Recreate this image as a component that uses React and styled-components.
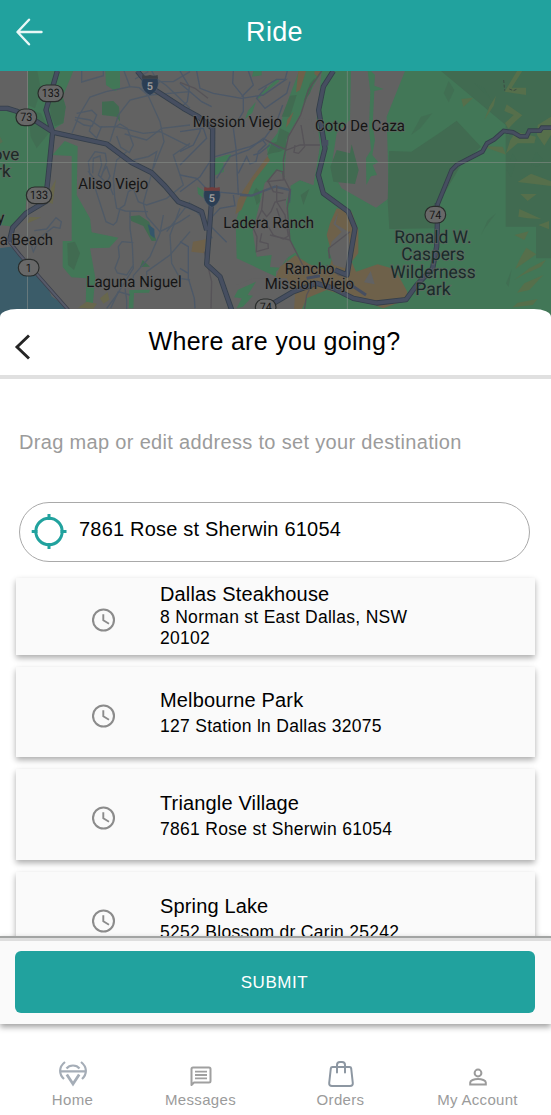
import React from 'react';
import styled, { createGlobalStyle } from 'styled-components';

const teal = '#21a29e';

const GlobalStyle = createGlobalStyle`
  * { box-sizing: border-box; }
  body {
    margin: 0;
    background: #fff;
    font-family: "Liberation Sans", Arial, sans-serif;
    color: #000;
  }
  button { font: inherit; border: 0; background: none; padding: 0; }
`;

const Screen = styled.div`
  width: 551px;
  height: 1115px;
  display: flex;
  flex-direction: column;
  overflow: hidden;
`;

const Header = styled.header`
  height: 71px;
  flex: none;
  display: grid;
  grid-template-columns: 59px 1fr 61px;
  align-items: center;
  background: ${teal};
  color: #fff;
  padding-bottom: 8px;
`;

const HeaderTitle = styled.h1`
  margin: 0;
  text-align: center;
  font-size: 27px;
  font-weight: 400;
  letter-spacing: 0.35px;
  line-height: 32px;
`;

const IconButton = styled.button`
  display: flex;
  padding-left: ${(p) => p.$inset}px;
  padding-top: ${(p) => p.$drop || 0}px;
`;

const MapView = styled.svg`
  display: block;
  flex: none;
  width: 551px;
  height: 250px;
  background: #626262;
  text-rendering: geometricPrecision;
`;

const Sheet = styled.main`
  position: relative;
  flex: none;
  margin-top: -12px;
  height: 627px;
  background: #fff;
  border-radius: 17px 17px 0 0 / 8px 8px 0 0;
  overflow: hidden;
`;

const SheetHeader = styled.div`
  height: 70px;
  border-bottom: 4px solid #e0e0e0;
  display: grid;
  grid-template-columns: 59px 1fr 61px;
  align-items: center;
`;

const SheetTitle = styled.h2`
  margin: 0;
  padding-bottom: 2px;
  text-align: center;
  font-size: 25px;
  font-weight: 400;
  letter-spacing: 0.29px;
  line-height: 32px;
`;

const Hint = styled.p`
  margin: 51px 0 0 19px;
  font-size: 20px;
  line-height: 24px;
  letter-spacing: 0.33px;
  color: #9b9b9b;
`;

const AddressField = styled.div`
  margin: 48px 21px 0 19px;
  height: 60px;
  border: 1px solid #a9a9a9;
  border-radius: 30px;
  display: flex;
  align-items: center;
  padding: 0 12px 2px 11px;
  gap: 11px;
  font-size: 20px;
  letter-spacing: 0.2px;
`;

const AddressText = styled.span`
  padding-bottom: 3px;
`;

const PlaceList = styled.div`
  display: flex;
  flex-direction: column;
  gap: 12px;
  padding: 16px 16px 0;
`;

const PlaceCard = styled.div`
  height: ${(p) => p.$height}px;
  flex: none;
  display: grid;
  grid-template-columns: 144px 270px;
  align-items: center;
  background: #fafafa;
  box-shadow: 0 3px 6px rgba(0, 0, 0, 0.33);
`;

const PlaceIcon = styled.div`
  display: flex;
  padding: ${(p) => p.$top}px 0 0 76px;
`;

const PlaceText = styled.div`
  padding-top: ${(p) => (p.$tight ? 0 : 1)}px;
  padding-bottom: ${(p) => (p.$tight ? 2 : 0)}px;
`;

const PlaceName = styled.div`
  font-size: 20px;
  line-height: 24px;
  letter-spacing: 0.15px;
  margin-bottom: ${(p) => (p.$tight ? 1 : 4)}px;
`;

const PlaceAddress = styled.div`
  font-size: 17.5px;
  line-height: 21px;
  letter-spacing: 0.29px;
`;

const SubmitBar = styled.div`
  position: relative;
  flex: none;
  height: 88px;
  border-top: 2px solid #a2a4a3;
  background: #fafafa;
  box-shadow: inset 0 3px 0 #dedede, 0 3px 6px rgba(0, 0, 0, 0.38);
  padding: 13px 16px 10px 15px;
`;

const SubmitButton = styled.button`
  display: block;
  width: 100%;
  height: 62px;
  border-radius: 6px;
  background: ${teal};
  color: #fff;
  font-size: 17px;
  letter-spacing: 0.55px;
  padding: 2px 1px 0 0;
`;

const TabBar = styled.nav`
  flex: none;
  height: 91px;
  display: grid;
  grid-template-columns: 145px 111px 169px 105px;
  padding: 32px 0 0;
`;

const Tab = styled.a`
  display: flex;
  flex-direction: column;
  align-items: center;
  color: #9b9b9b;
  font-size: 15px;
  line-height: 18px;
  letter-spacing: 0.32px;
`;

const TabIcon = styled.span`
  height: 35px;
  display: flex;
  align-items: center;
  padding-top: ${(p) => p.$drop || 0}px;
`;

const MapLabel = styled.text`
  font-family: Roboto, sans-serif;
  font-size: ${(p) => p.$size || 47}px;
  fill: ${(p) => p.$fill || '#151515'};
  stroke: #646464;
  stroke-opacity: 0.7;
  stroke-width: 5px;
  paint-order: stroke;
  text-anchor: middle;
`;

function PlaceLabel({ width, children, ...rest }) {
  return (
    <MapLabel textLength={width} lengthAdjust="spacingAndGlyphs" {...rest}>
      {children}
    </MapLabel>
  );
}

function RouteShield({ x, y, n }) {
  const w = n.length === 3 ? 76 : 62;
  return (
    <g>
      <rect x={x - w / 2} y={y - 25} width={w} height="50" rx="25" fill="#686868" stroke="#292c2b" strokeWidth="3.5" />
      <text x={x} y={y + 12} textAnchor="middle" fontFamily="Roboto, sans-serif" fontSize="35" textLength={n.length * 18} lengthAdjust="spacingAndGlyphs" fill="#151515">{n}</text>
    </g>
  );
}

function InterstateShield({ x, y, top }) {
  return (
    <g transform={`translate(${x} ${y})`}>
      <path d="M-23-18H23C29 4 21 23 0 33C-21 23-29 4-23-18Z" fill="#2b3e54" stroke="#526071" strokeWidth="1.5" />
      <path d="M-23-28Q-13-23 0-28Q13-23 23-28L24-17H-24Z" fill={top} />
      <text y="17" textAnchor="middle" fontFamily="Roboto, sans-serif" fontWeight="700" fontSize="33" fill="#999">5</text>
    </g>
  );
}

const land = '#626262';
const green = '#427757';
const darkGreen = '#416b51';
const olive = '#566f4b';
const sand = '#6e614a';

const highways =
  'M0 130H22L48 138L98 162L160 202L320 237L395 293L455 323L495 363L535 410L570 423L605 440L620 495' +
  'M172 18L138 135L158 202L144 340L136 410L78 445L38 488L28 530' +
  'M412 18L450 65L550 130L595 155L638 190L637 380L620 598L660 635L695 735' +
  'M1000 18L970 65L956 135L975 250L955 330L970 385L1045 440L1065 490L1041 630L1005 615' +
  'M1312 415V480L1310 545L1298 610L1250 660L1218 704L1130 714L1060 700L1000 670L950 655L880 680L820 715';

const ortega =
  'M1653 188H1626L1620 197H1588L1580 214H1560L1539 202L1511 198L1483 223L1461 235L1447 260L1370 300L1355 315L1312 420';

function RegionMap() {
  return (
    <MapView viewBox="0 18 1653 750" preserveAspectRatio="none" role="img" aria-label="Map">
      {/* west: parks and water */}
      <g>
        <path d="M84 18H220L188 95L197 125L190 174L165 190L155 212L148 320L140 370L80 390L76 444L40 485L0 480V137L84 133Z" fill={green} />
        <path d="M84 133L123 145L150 200L110 250L92 215ZM84 18H112L123 75L105 130L84 120Z" fill={darkGreen} opacity=".7" />
        <path d="M148 100L188 95L197 125L190 174L165 184L152 150Z" fill={darkGreen} />
        <path d="M316 18H360V71L345 78L318 60Z" fill={green} />
        <path d="M306 110L340 108L357 125L360 170L350 155L306 150Z" fill={darkGreen} />
        <path d="M157 270L194 228L233 244L230 390L270 460L275 502L355 518L328 548L270 550L286 638L284 660L278 723H257L259 640L214 637L188 606V528H215V273Z" fill={green} />
        <path d="M202 535L225 530L240 565L222 615L204 600Z" fill={darkGreen} />
        <path d="M388 454L418 451L447 470L470 527L455 528L430 483L394 468ZM428 585L450 605L420 606Z" fill={darkGreen} />
        <path d="M443 477L463 492L464 520L451 510Z" fill="#34566b" />
        <path d="M388 675L450 674L447 683L402 684L400 730H386Z" fill={green} />
        <path d="M0 550L30 545L50 557L80 610L137 655L155 694L180 712L202 735V775H0Z" fill="#3b5c69" />
        <path d="M153 370L168 342L158 417L146 412ZM88 456L124 457L82 475ZM300 700L323 681L328 704L310 716ZM234 728L260 710L291 716L280 731Z" fill="#68674d" />
        <path d="M0 215L8 230L0 236Z" fill="#556e52" />
      </g>

      {/* centre: parks along the valley */}
      <path d="M965 18H1653V768H900L905 690L858 610L870 520L862 440L872 362L900 345L940 360L960 240L950 160Z" fill={green} />
      <g transform="translate(540 0)">
        <path d="M220 18H245V31L216 35ZM290 41L299 48L230 105L234 95ZM228 110L217 143L195 163L204 137ZM106 280L136 271L153 268L149 285L130 292L132 320L102 332ZM52 365L72 378L71 400L54 387Z" fill={green} />
        <path d="M357 18H426L385 90L360 150L325 210L314 340L330 375L330 525L318 590L288 620L288 635L170 580L167 470L190 400L265 275L260 245L292 205L330 90Z" fill={green} />
        <path d="M305 155L330 92L350 90L330 155ZM390 55L405 38L390 85L370 110Z" fill={darkGreen} />
        <path d="M261 270L275 235L290 230L300 190L330 205L318 225L318 250L300 260L275 265Z" fill={darkGreen} />
        <path d="M355 18H378L360 75L348 82ZM404 18H421L414 35L403 27ZM262 274L270 286L220 350L184 435L166 448L174 405L190 376L220 331ZM322 163L341 140L329 173L318 188Z" fill={sand} />
        <path d="M39 530L78 523L73 565L34 560Z" fill={sand} />
        <path d="M254 355L295 313L316 340L332 375L318 410L330 525L350 560L320 580L302 608L270 606L275 570L230 575L218 500Z" fill={land} />
        <path d="M360 160L395 165L405 225L420 240L400 360L360 345L332 358L312 330L322 225Z" fill={land} />
        <path d="M228 368L238 377L240 409L230 420L220 385ZM362 390L388 372L370 420Z" fill={darkGreen} />
      </g>
      <path d="M826 640L840 605L886 571L928 598L985 618L998 575L980 510L990 475L1010 430L1055 440L1075 495L1075 565L1055 590L1068 620L1133 598L1185 613L1222 680L1218 705L1150 730L1080 705L980 675L920 700L890 768H850L880 705Z" fill={sand} />
      <path d="M760 640H860L885 690L880 768H710V660Z" fill={land} />
      <path d="M1015 440L1007 477L1045 500L1050 560L1035 610L1000 600L988 560L995 530L1025 500L1000 477ZM1112 618L1124 658L1092 652Z" fill={land} />
      <path d="M714 674L768 650L743 690L759 692L729 725L710 730L725 700L702 697Z" fill={green} />

      {/* east: plateau and wilderness */}
      <path d="M1053 18H1215L1160 155L1167 400L1128 428L1025 370L993 315L1010 205L1050 165Z" fill={land} />
      <path d="M1010 255L1050 265L1055 238L1065 275L1076 315L1065 357L1000 350L991 305Z" fill={darkGreen} />
      <g transform="translate(1083 0)">
        <path d="M240 18H570V485H434V180ZM84 258L151 260L245 197L287 167L360 245L300 300L230 420L225 490L85 492L80 410ZM525 485H570V580H525Z" fill={darkGreen} />
        <path d="M30 18L42 30L40 62L68 72L40 78L35 180L42 225L34 270L52 292L35 300L48 330L30 334L16 360L15 280L30 255L24 190L28 80L20 18Z" fill={green} />
        <g fill={olive}>
          <path d="M468 18H484L452 68H495V90L431 80ZM301 102L337 98L307 126ZM405 92L398 122L370 165L385 125ZM430 138L437 118L484 151L462 170L442 191L432 174L458 150ZM359 243L425 245L435 269L385 251ZM465 200L525 215L520 235L470 235L435 265L448 225ZM530 180L570 155V210L550 242L528 210ZM510 326L570 349V363L470 351ZM478 387H527L500 408ZM475 432L541 462L500 460L472 455ZM532 480L564 468V493ZM460 510L503 499L490 525ZM496 548L526 568L462 613L480 575ZM505 610L555 584L540 605L485 630L460 644ZM490 655L547 630L505 675L468 683ZM470 713L530 702L515 720L455 727Z" />
        </g>
        <g fill={darkGreen} opacity=".65">
          <path d="M263 48L280 75L263 112L248 85ZM214 145L178 190L150 210L180 155ZM405 445L370 492L360 510L380 466ZM452 613L443 666L435 655ZM340 55L370 70L390 105ZM455 265L466 285L450 335L437 315ZM525 260L545 282L532 305L510 300Z" />
        </g>
      </g>

      {/* local streets */}
      <g fill="none" stroke="#4f5a67" strokeWidth="4">
        <path d="M245 18V51L310 32V18M372 18L390 65L318 80L270 96L238 150L216 205M390 65L418 68L444 91L480 170L492 230L460 310M225 157L270 165L300 186L350 185L430 205L480 200L570 245" />
        <path d="M230 145L275 136L290 150L276 184L252 180L225 164M305 184L290 219L268 198L274 180M345 186L360 177L382 190L400 240L388 263L362 247L350 213M330 230L355 150L390 105L450 90L570 80" />
        <path d="M374 207L440 225L485 190L570 180M380 260L350 285L340 340L344 395L350 430L376 438L444 440M400 285L445 275L470 260L455 325L430 415L440 455L480 500L540 470L570 450" />
        <path d="M270 330L265 290L285 260L316 265L320 290L303 337M278 325L280 280L300 273L305 300L295 330L330 365L340 390M310 318L320 305L330 333L320 355L285 345L264 318" />
        <path d="M284 365L318 470L340 480L350 470L360 430L374 420L385 380L400 370L415 410L440 420L500 400L550 360L520 270L570 235" />
        <path d="M390 440V490L397 540L400 610L350 690L320 730M400 533L366 530L355 545L358 576L345 610L352 624L380 630L400 600M490 450L480 505L450 575L400 632L400 655M500 500L570 410M540 430L510 510L515 595L540 640L570 645" />
        <path d="M430 80L480 50H520L570 20M455 18L468 40L500 62L570 130M405 42L445 20M103 497L140 492L168 458L184 470L180 490L160 486L120 518L100 560L90 530M440 650V620L510 570L570 500M375 670L380 705V735M332 730L355 680L390 690" />
      </g>
      <g transform="translate(540 0)" fill="none" stroke="#4c5868" strokeWidth="4">
        <path d="M0 55L65 110L95 125M0 18L28 65L22 110L0 130M50 18L60 70L100 85L185 100L250 90L318 43H290L235 75M160 18L158 55L190 95V140L160 190L168 250L175 390M315 43L322 18M0 200L70 190L80 220L0 300M0 260L40 240L60 200L65 155M260 65L230 100L255 130L320 85L330 50M185 95L220 60L205 18M0 380L60 335L98 277L210 245L250 225L290 170L308 120" />
        <path d="M248 225L258 238L235 260L228 290L210 297L200 275L175 325M100 380L210 390M0 420L50 440L98 490L140 532M0 530L25 545V640L43 700L45 730M25 625L0 610M92 460L120 430L165 422L160 390M97 390L50 340L0 330M97 520L70 480M220 270L238 265L270 240" />
        <path d="M110 340L150 275L205 255L250 220L300 250" />
        <path d="M180 390L215 392L250 378L285 365L330 375L327 413" strokeWidth="7" />
      </g>
      <g fill="none" stroke="#565358" strokeWidth="4" transform="translate(540 0)">
        <path d="M425 18L385 75L362 150L325 215L310 285L312 340L330 375L322 430L330 525L368 600M262 350L290 315L308 320L310 345L260 350M251 375L245 435L260 455L273 440L285 411L318 404M245 435L220 490L231 515L229 560L265 550L264 536L240 530L245 505M290 360V410L315 450L325 513L310 522L280 510L250 460M257 225L320 255L360 240L420 240M363 180L374 245L356 265L342 262L345 240M265 350L280 380L310 385M290 430L305 475M330 525L270 510" />
        <path d="M84 100L45 70L0 52M73 560L95 650L93 730M448 580L446 550L510 500M450 580L445 555M373 735L380 690L400 650M440 600L475 630L500 635" />
      </g>

      {/* highways: dark casing, then the road surface */}
      <path d="M28 530L60 570L205 735" fill="none" stroke="#3b3f4b" strokeWidth="11" />
      <path d="M28 530L60 570L205 735" fill="none" stroke="#565a69" strokeWidth="6" />
      <path d={highways} fill="none" stroke="#343f4b" strokeWidth="16" strokeLinejoin="round" />
      <path d={highways} fill="none" stroke="#464e60" strokeWidth="11" strokeLinejoin="round" />
      <path d={ortega} fill="none" stroke="#343f4b" strokeWidth="14" />
      <path d={ortega} fill="none" stroke="#464e60" strokeWidth="9" />
      <path d="M920 640L960 632M1045 655L1098 690" fill="none" stroke="#464e60" strokeWidth="9" />
      <path d="M975 225V242" fill="none" stroke="#464e60" strokeWidth="20" />

      <path d="M82.500 18V768M1042 18V768M0 292.500H1653" stroke="#8b918d" strokeWidth="2.500" opacity=".65" />
      <path d="M1511 45L1514 77M1528 72L1540 77L1552 72" fill="none" stroke="#3b4b43" strokeWidth="3" strokeDasharray="9 5" />

      <RouteShield x={152} y={85} n="133" />
      <RouteShield x={79} y={157} n="73" />
      <RouteShield x={117} y={391} n="133" />
      <RouteShield x={86} y={608} n="1" />
      <RouteShield x={1306} y={449} n="74" />
      <RouteShield x={797} y={727} n="74" />
      <InterstateShield x={450} y={58} top="#3b4045" />
      <InterstateShield x={636} y={394} top="#713d3d" />

      <PlaceLabel x="340" y="372" width="210">Aliso Viejo</PlaceLabel>
      <PlaceLabel x="402" y="666" width="286">Laguna Niguel</PlaceLabel>
      <PlaceLabel x="79" y="540" width="160">a Beach</PlaceLabel>
      <PlaceLabel x="2" y="474">y</PlaceLabel>
      <PlaceLabel x="18" y="284" $size={51} $fill="#1d2925">ove</PlaceLabel>
      <PlaceLabel x="10" y="336" $size={51} $fill="#1d2925">rk</PlaceLabel>
      <PlaceLabel x="712" y="187" width="268">Mission Viejo</PlaceLabel>
      <PlaceLabel x="1080" y="198" width="270">Coto De Caza</PlaceLabel>
      <PlaceLabel x="806" y="488" width="272">Ladera Ranch</PlaceLabel>
      <PlaceLabel x="929" y="627" width="149">Rancho</PlaceLabel>
      <PlaceLabel x="928" y="672" width="268">Mission Viejo</PlaceLabel>
      <PlaceLabel x="1299" y="534" $size={53} $fill="#182b29" width="232">Ronald W.</PlaceLabel>
      <PlaceLabel x="1299" y="586" $size={53} $fill="#182b29" width="190">Caspers</PlaceLabel>
      <PlaceLabel x="1299" y="638" $size={53} $fill="#182b29" width="256">Wilderness</PlaceLabel>
      <PlaceLabel x="1299" y="691" $size={53} $fill="#182b29" width="106">Park</PlaceLabel>
    </MapView>
  );
}

const ClockIcon = () => (
  <svg width="24" height="24" viewBox="0 0 24 24" fill="none" stroke="#8b8b8b">
    <circle cx="11.500" cy="12" r="10.500" strokeWidth="2.100" />
    <path d="M11.300 6.200V12.300L17 15.700" strokeWidth="1.900" />
  </svg>
);

const TargetIcon = () => (
  <svg width="37" height="37" viewBox="0 0 37 37" fill="none" stroke={teal} strokeWidth="3">
    <circle cx="18" cy="18.500" r="13.200" />
    <path d="M18 1V7M18 30V36M.7 18.500H6.500M29.500 18.500H35.500" />
  </svg>
);

const HomeIcon = () => (
  <svg width="28" height="26" viewBox="0 0 28 26" fill="none" stroke="#a5adb7" strokeWidth="2.200">
    <path d="M6 1C-.3 6-.3 13 5 18M22 1C28.300 6 28.300 13 23 18M1.500 10.400H26.500" />
    <path d="M7.500 7.500C10.500 3.500 17.500 3.500 20.500 7.500" />
    <path d="M7.800 13.500L14 23L20.200 13.500" strokeWidth="2.800" />
  </svg>
);

const MessageIcon = () => (
  <svg width="22" height="21" viewBox="0 0 22 21" fill="none" stroke="#a0a0a0" strokeWidth="2">
    <path d="M1.500 19V3Q1.500 1.500 3 1.500H19Q20.500 1.500 20.500 3V15Q20.500 16.500 19 16.500H4Z" strokeLinejoin="round" />
    <path d="M5 5.600H17M5 9H17M5 12.400H17" strokeWidth="1.800" />
  </svg>
);

const BagIcon = () => (
  <svg width="26" height="26" viewBox="0 0 26 26" fill="none" stroke="#8d97a2" strokeWidth="2" strokeLinecap="round">
    <path d="M4.500 6H21.500Q23 6 23.200 7.500L24.800 22Q25 25 22 25H4Q1 25 1.200 22L2.800 7.500Q3 6 4.500 6Z" />
    <path d="M9 11.500V4Q9 1 12 1H14Q17 1 17 4V11.500" />
  </svg>
);

const AccountIcon = () => (
  <svg width="18" height="18" viewBox="0 0 18 18" fill="none" stroke="#9b9b9b" strokeWidth="2">
    <circle cx="9" cy="5" r="3.400" />
    <path d="M1.200 16.500V14.500C1.200 12.500 5 11 9 11S16.800 12.500 16.800 14.500V16.500Z" />
  </svg>
);

const places = [
  { name: 'Dallas Steakhouse', address: '8 Norman st East Dallas, NSW 20102', height: 77, tight: true, iconTop: 7 },
  { name: 'Melbourne Park', address: '127 Station ln Dallas 32075', height: 90, iconTop: 8 },
  { name: 'Triangle Village', address: '7861 Rose st Sherwin 61054', height: 91, iconTop: 7 },
  { name: 'Spring Lake', address: '5252 Blossom dr Carin 25242', height: 91, iconTop: 7 },
];

const tabs = [
  { label: 'Home', icon: <HomeIcon />, drop: 0 },
  { label: 'Messages', icon: <MessageIcon />, drop: 5 },
  { label: 'Orders', icon: <BagIcon />, drop: 0 },
  { label: 'My Account', icon: <AccountIcon />, drop: 6 },
];

export default function App() {
  return (
    <Screen>
      <GlobalStyle />
      <Header>
        <IconButton $inset={16} aria-label="Back">
          <svg width="28" height="28" viewBox="0 0 28 28" fill="none" stroke="#e9f7f6" strokeWidth="2.400" strokeLinecap="round" strokeLinejoin="round">
            <path d="M13 1.700L1.500 14L13 26.300M2 14H25.500" />
          </svg>
        </IconButton>
        <HeaderTitle>Ride</HeaderTitle>
      </Header>
      <RegionMap />
      <Sheet>
        <SheetHeader>
          <IconButton $inset={14} $drop={9} aria-label="Close">
            <svg width="17" height="27" viewBox="0 0 17 27" fill="none" stroke="#252525" strokeWidth="2.900">
              <path d="M15 2.500L3 14L15 25.500" />
            </svg>
          </IconButton>
          <SheetTitle>Where are you going?</SheetTitle>
        </SheetHeader>
        <Hint>Drag map or edit address to set your destination</Hint>
        <AddressField>
          <TargetIcon />
          <AddressText>7861 Rose st Sherwin 61054</AddressText>
        </AddressField>
        <PlaceList>
          {places.map((p) => (
            <PlaceCard key={p.name} $height={p.height}>
              <PlaceIcon $top={p.iconTop}><ClockIcon /></PlaceIcon>
              <PlaceText $tight={p.tight}>
                <PlaceName $tight={p.tight}>{p.name}</PlaceName>
                <PlaceAddress>{p.address}</PlaceAddress>
              </PlaceText>
            </PlaceCard>
          ))}
        </PlaceList>
      </Sheet>
      <SubmitBar>
        <SubmitButton>SUBMIT</SubmitButton>
      </SubmitBar>
      <TabBar>
        {tabs.map((t) => (
          <Tab key={t.label}>
            <TabIcon $drop={t.drop}>{t.icon}</TabIcon>
            {t.label}
          </Tab>
        ))}
      </TabBar>
    </Screen>
  );
}
